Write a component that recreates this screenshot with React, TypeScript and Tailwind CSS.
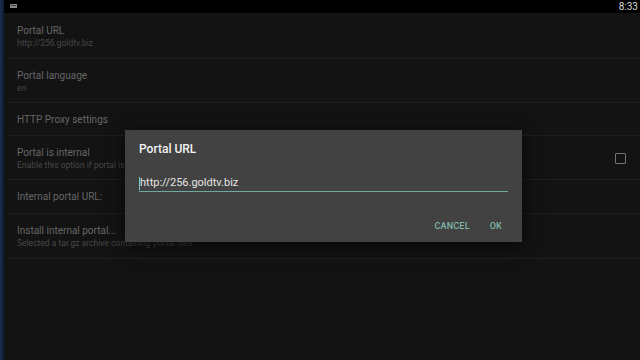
const rows = [
    { title: 'Portal URL', summary: 'http://256.goldtv.biz', h: 'h-[46px]' },
    { title: 'Portal language', summary: 'en', h: 'h-[44px]' },
    { title: 'HTTP Proxy settings', h: 'h-[33px]' },
    { title: 'Portal is internal', summary: 'Enable this option if portal is located on the device', h: 'h-[44px]', checkbox: true },
    { title: 'Internal portal URL:', h: 'h-[34px]' },
    { title: 'Install internal portal...', summary: 'Selected a tar.gz archive containing portal files', h: 'h-[45px]' },
];

export default function App() {
    return (
        <div className="relative w-[640px] h-[360px] overflow-hidden bg-[#131313] font-['Roboto',sans-serif] flex">
            {/* left edge strip */}
            <div className="w-[4px] h-full bg-gradient-to-r from-[#1a2f55] to-[#0f1a30] shrink-0" />

            <div className="flex-1 flex flex-col">
                {/* status bar */}
                <div className="h-[13px] bg-black flex items-center justify-between pl-[6px] pr-[2px] shrink-0">
                    <svg width="7" height="5" viewBox="0 0 7 5">
                        <rect x="0" y="0" width="7" height="4" rx="0.5" fill="#8a8a8a" />
                        <rect x="1" y="1" width="5" height="1" fill="#3a3a3a" />
                    </svg>
                    <span className="text-[10px] leading-none text-[#d8d8d8]">8:33</span>
                </div>

                {/* preference list */}
                <div className="flex flex-col">
                    {rows.map(row => (
                        <div key={row.title} className={`${row.h} ml-[3px] border-b border-[#1e1e1e] flex items-center pl-[10px] pr-[14px]`}>
                            <div className="flex-1 flex flex-col pt-[1px]">
                                <div className="text-[10px] leading-[14px] text-[#666666]">{row.title}</div>
                                {row.summary && (
                                    <div className="text-[8.5px] leading-[11px] text-[#474747]">{row.summary}</div>
                                )}
                            </div>
                            {row.checkbox && (
                                <div className="w-[11px] h-[11px] border-[1.5px] border-[#727272] rounded-[1px] mt-[2px]" />
                            )}
                        </div>
                    ))}
                </div>
            </div>

            {/* dialog */}
            <div className="absolute left-[125px] top-[130px] w-[397px] h-[112px] bg-[#424242] shadow-[0_4px_16px_rgba(0,0,0,0.7)] flex flex-col pt-[11px] px-[14px] pb-[11px]">
                <div className="text-[12px] leading-[16px] font-medium text-[#f2f2f2]">Portal URL</div>
                <div className="mt-[19px] border-b border-[#6fa89f] pb-[1px] flex items-center">
                    <span className="w-[1px] h-[13px] bg-[#80cbc4]" />
                    <span className="text-[11px] leading-[14px] text-[#e6e6e6]">http://256.goldtv.biz</span>
                </div>
                <div className="mt-auto flex justify-end items-center gap-[20px] pr-[6px]">
                    <span className="text-[9px] leading-[10px] font-medium tracking-[0.2px] text-[#7fb5ab]">CANCEL</span>
                    <span className="text-[9px] leading-[10px] font-medium tracking-[0.2px] text-[#7fb5ab]">OK</span>
                </div>
            </div>
        </div>
    );
}
